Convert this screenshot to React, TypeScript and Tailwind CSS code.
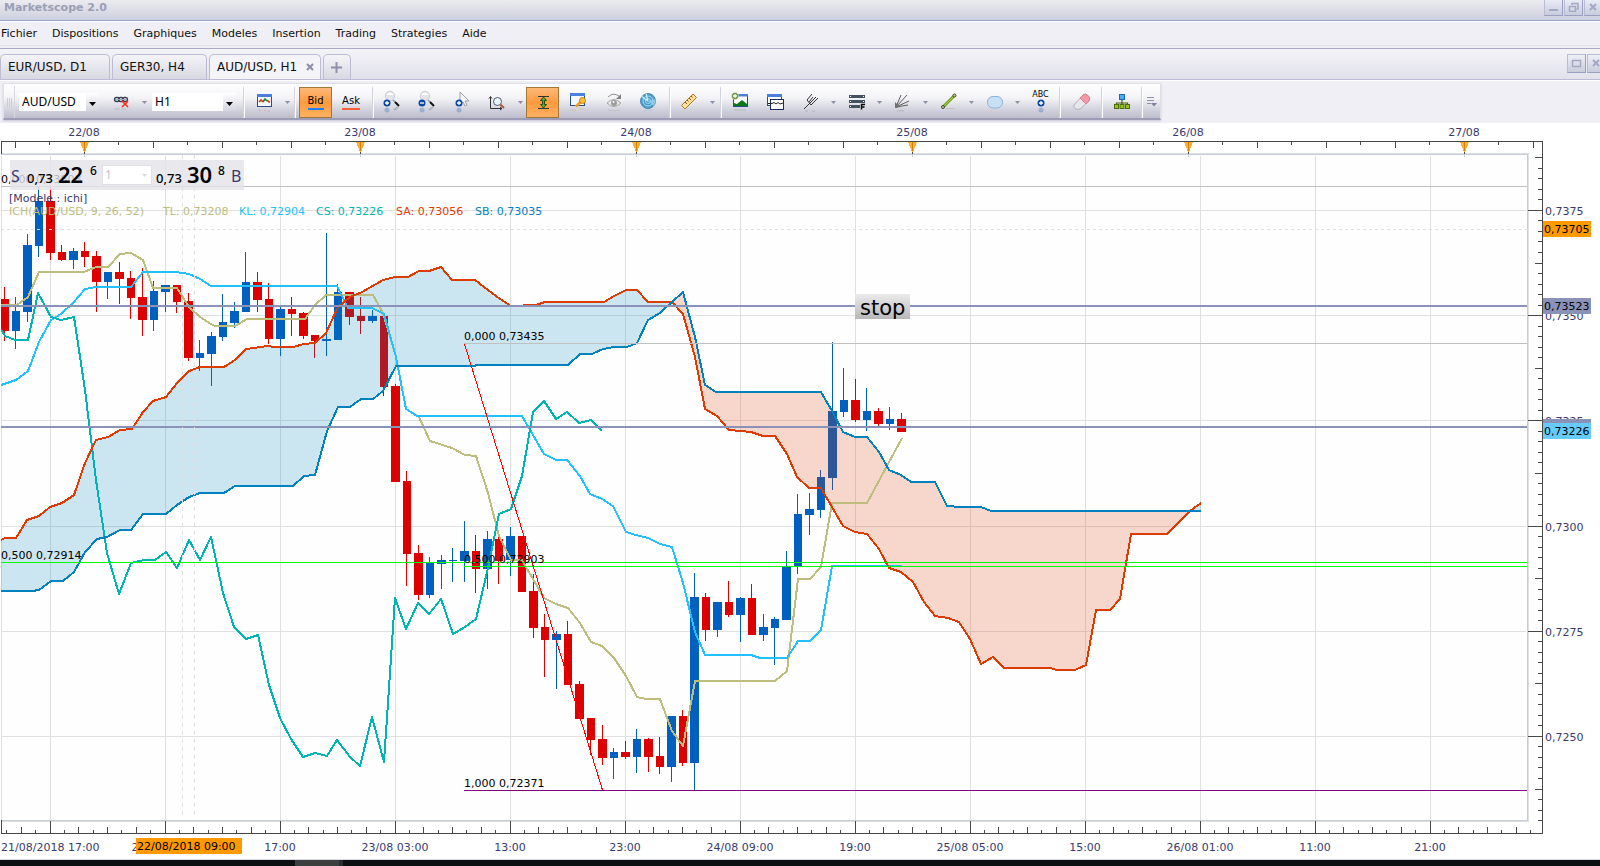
import type { ReactNode } from 'react'
import clsx from 'clsx'

// open/close coded by colour, prices kept as chart y positions:
// [up, high, low, bodyTop, bodyBottom]
type Candle = [number, number, number, number, number]

const CANDLES: Candle[] = [
  [0, 287, 341, 299, 331], [1, 297, 349, 311, 331], [1, 234, 322, 245, 312], [1, 187, 257, 201, 246],
  [0, 187, 260, 201, 253], [0, 245, 261, 252, 260], [1, 248, 269, 251, 260], [0, 242, 267, 251, 257],
  [0, 251, 312, 256, 282], [1, 272, 299, 272, 282], [0, 262, 304, 272, 279], [0, 271, 319, 278, 298],
  [0, 268, 336, 297, 320], [1, 281, 331, 291, 320], [1, 285, 312, 285, 292], [0, 285, 313, 285, 302],
  [0, 293, 361, 301, 358], [1, 340, 371, 353, 358], [1, 332, 386, 336, 354], [1, 294, 341, 322, 337],
  [1, 302, 328, 311, 323], [1, 252, 312, 282, 312], [0, 272, 312, 282, 300], [0, 283, 344, 299, 339],
  [1, 307, 356, 309, 339], [0, 297, 336, 309, 314], [0, 312, 339, 313, 336], [0, 335, 358, 335, 341],
  [1, 233, 356, 339, 341], [1, 284, 340, 292, 340], [0, 292, 325, 292, 317], [0, 297, 334, 316, 321],
  [1, 310, 323, 316, 321], [0, 312, 396, 316, 387], [0, 384, 482, 386, 482], [0, 471, 586, 481, 554],
  [0, 545, 600, 553, 595], [1, 557, 598, 562, 595], [1, 555, 589, 560, 564], [1, 548, 582, 560, 561],
  [1, 521, 582, 551, 561], [0, 535, 593, 551, 569], [1, 531, 589, 539, 569], [0, 530, 584, 539, 561],
  [1, 527, 576, 536, 560], [0, 536, 592, 536, 592], [0, 574, 638, 591, 628], [0, 614, 677, 627, 640],
  [1, 631, 689, 634, 640], [0, 621, 685, 634, 685], [0, 681, 719, 684, 719], [0, 718, 755, 718, 740],
  [0, 725, 765, 739, 758], [1, 748, 779, 752, 758], [0, 741, 759, 752, 757], [1, 729, 773, 739, 757],
  [0, 738, 772, 739, 757], [0, 737, 774, 756, 767], [1, 716, 782, 716, 767], [0, 710, 766, 716, 763],
  [1, 573, 791, 597, 763], [0, 593, 641, 597, 630], [1, 602, 637, 602, 630], [0, 581, 617, 602, 615],
  [1, 597, 642, 598, 615], [0, 584, 635, 598, 635], [1, 614, 641, 627, 635], [1, 617, 665, 619, 628],
  [1, 551, 620, 566, 620], [1, 494, 574, 514, 566], [1, 493, 535, 509, 515], [1, 470, 518, 477, 510],
  [1, 342, 490, 411, 478], [1, 368, 417, 400, 412], [0, 379, 422, 400, 420], [1, 388, 431, 411, 420],
  [0, 408, 426, 411, 424], [1, 407, 430, 419, 424], [0, 413, 432, 419, 432],
]

const TENKAN =
  '1,305 17,305 28,297 39,272 84,272 96,267 108,267 120,254 131,253 143,260 153,288 177,288 189,307 200,317 211,324 215,326 235,326 247,319 305,319 315,305 326,295 373,295 383,313 396,357 406,409 419,417 430,441 452,448 465,455 476,456 488,493 499,536 511,560 522,560 533,579 544,598 556,604 568,608 580,623 591,642 602,646 614,658 626,676 637,697 646,699 660,699 672,731 683,746 695,681 775,681 787,671 798,579 810,579 821,567 832,503 867,503 902,438'
const KIJUN =
  '1,385 16,380 28,371 39,342 51,320 61,314 73,303 85,289 96,287 131,287 143,272 176,272 189,274 200,279 211,286 337,286 348,308 372,308 384,314 396,357 406,409 417,416 522,416 533,435 544,454 556,460 567,460 580,476 590,494 602,499 613,506 626,532 636,535 648,538 660,544 672,547 683,583 695,632 705,655 751,655 760,658 787,658 798,641 810,641 821,630 832,566 902,566'
const CHIKOU =
  '1,329 5,336 15,340 28,340 38,293 51,317 61,320 74,317 85,390 96,480 107,553 119,594 131,563 144,560 155,560 166,552 177,568 189,540 200,560 211,537 223,593 234,627 246,639 258,635 269,685 280,718 291,739 303,757 315,753 327,756 337,740 350,757 360,766 372,717 384,762 395,598 406,629 418,603 429,614 441,599 453,634 465,627 476,619 488,568 499,514 511,509 522,476 533,412 544,401 556,419 567,412 579,423 591,420 602,431'

// both spans are split where they cross, so the cloud can change colour
const SPAN_A = [
  '1,540 5,538 16,538 27,520 39,516 50,507 62,503 74,495 85,463 96,440 108,437 120,430 132,429 143,412 153,401 166,397 177,383 189,371 200,367 224,367 235,360 246,349 268,346 274,347 293,347 304,344 315,343 326,333 338,307 350,297 362,292 383,280 395,277 408,277 419,271 429,271 441,267 452,280 475,280 488,290 500,299 511,306 536,305 545,302 604,302 614,296 626,290 637,290 648,302 672,302',
  '672,302 683,314 695,357 705,409 717,416 729,430 751,432 763,436 775,436 787,454 797,477 809,488 821,488 832,507 843,526 855,532 867,534 879,549 889,568 901,572 913,582 924,602 935,616 948,618 959,622 970,639 981,664 993,657 1004,668 1050,668 1057,670 1075,670 1086,665 1096,610 1110,610 1120,599 1131,534 1167,534 1190,511',
  '1190,511 1201,503',
]
const SPAN_B = [
  '1,591 32,591 39,590 51,581 63,581 74,572 85,552 97,539 107,537 120,530 131,530 143,514 166,514 177,505 189,497 200,493 224,493 235,486 293,486 304,476 315,475 327,431 338,407 350,407 361,399 373,399 383,391 396,366 475,366 476,365 568,365 580,354 592,354 603,349 614,347 627,347 637,343 648,320 660,313 672,302',
  '672,302 683,292 695,337 705,385 716,392 821,392 832,411 843,432 855,437 867,437 879,452 889,470 901,475 911,482 935,482 947,506 960,507 981,507 991,511 1190,511',
  '1190,511 1201,511',
]
const CLOUD_FILL = ['#0082be', '#dc3c00', '#0082be']

const GRID_X = Array.from({ length: 13 }, (_, i) => 50 + 115 * i)
const GRID_Y = [210, 315, 420, 526, 631, 736]
const DAYS = ['22/08', '23/08', '24/08', '25/08', '26/08', '27/08']
const HOURS = ['17:00', '23/08 03:00', '13:00', '23:00', '24/08 09:00', '19:00', '25/08 05:00', '15:00', '26/08 01:00', '11:00', '21:00']
const PRICES = ['0,7375', '0,7350', '0,7325', '0,7300', '0,7275', '0,7250']

const LEGEND = [
  { x: 9, text: 'ICH(AUD/USD, 9, 26, 52)', color: '#bdbd7d' },
  { x: 163, text: 'TL: 0,73208', color: '#bdbd7d' },
  { x: 239, text: 'KL: 0,72904', color: '#22c0ff' },
  { x: 316, text: 'CS: 0,73226', color: '#00b4b4' },
  { x: 396, text: 'SA: 0,73056', color: '#dc3c00' },
  { x: 475, text: 'SB: 0,73035', color: '#0082be' },
]

const cloudPoints = (i: number) => `${SPAN_A[i]} ${SPAN_B[i].split(' ').reverse().join(' ')}`

/* ---------- chart ---------- */

function Axes() {
  const top = Array.from({ length: 45 }, (_, i) => i - 2)
  const right = Array.from({ length: 64 }, (_, i) => i - 5)
  const bottom = Array.from({ length: 107 }, (_, i) => i - 3)
  return (
    <g>
      <g fill="#484848">
        <rect x={1} y={141} width={1542} height={1} />
        <rect x={1} y={141} width={1} height={13} />
        <rect x={1542} y={141} width={1} height={693} />
        <rect x={1} y={833} width={1542} height={1} />
        <rect x={1} y={820} width={1} height={14} />
        {top.map((k) => (
          <rect key={k} x={Math.floor(84 + 34.5 * k)} y={142} width={1} height={k % 8 === 0 ? 12 : k % 2 === 0 ? 6 : 3} />
        ))}
        {right.map((k) => {
          const len = k % 10 === 0 ? 14 : k % 5 === 0 ? 7 : 4
          return <rect key={k} x={1542 - len} y={Math.floor(210.4 + 10.52 * k)} width={len} height={1} />
        })}
        {bottom.map((k) => {
          const len = k % 8 === 0 ? 12 : k % 2 === 0 ? 6 : 3
          return <rect key={k} x={Math.floor(50 + 14.375 * k)} y={833 - len} width={1} height={len} />
        })}
      </g>
      {DAYS.map((day, i) => {
        const x = 84 + 276 * i
        return (
          <g key={day}>
            <path d={`M${x - 4} 142h9l-4 10h-1z`} fill="#ffae33" />
            <rect x={x} y={142} width={1} height={9} fill="#d98200" />
            <rect x={x} y={154} width={1} height={3} fill="#c3cdd9" />
            <text x={x} y={136} textAnchor="middle" fill="#3a3a6e">{day}</text>
          </g>
        )
      })}
      <g fill="#3a3a6e">
        <text x={1} y={851}>21/08/2018 17:00</text>
        <text x={165} y={851} textAnchor="middle">22/08 07:00</text>
        {HOURS.map((hour, i) => (
          <text key={i} x={280 + 115 * i} y={851} textAnchor="middle">{hour}</text>
        ))}
        {PRICES.map((price, i) => (
          <text key={price} x={1545} y={GRID_Y[i] + 5}>{price}</text>
        ))}
      </g>
      <rect x={136} y={838} width={106} height={16} fill="#ff9900" />
      <text x={137} y={850}>22/08/2018 09:00</text>
      <PriceTag y={221} fill="#ff9900" text="0,73705" />
      <PriceTag y={298} fill="#8a92b8" text="0,73523" />
      <PriceTag y={419} fill="#8a92b8" />
      <PriceTag y={423} fill="#66ccff" text="0,73226" />
    </g>
  )
}

function PriceTag({ y, fill, text }: { y: number; fill: string; text?: string }) {
  return (
    <g>
      <rect x={1543} y={y} width={48} height={16} fill={fill} />
      {text && <text x={1544} y={y + 12}>{text}</text>}
    </g>
  )
}

function Chart() {
  return (
    <svg
      viewBox="0 123 1600 736"
      className="block h-auto w-full bg-white font-['DejaVu_Sans',Verdana,sans-serif] text-[11px]"
      shapeRendering="crispEdges"
      role="img"
      aria-label="AUD/USD H1"
    >
      {/* grid and frame */}
      <rect x={1} y={155} width={1526} height={665} fill="#fefefe" />
      <g fill="#e0e0e0">
        <rect x={1} y={156} width={1} height={664} />
        {GRID_X.map((x) => <rect key={x} x={x} y={156} width={1} height={664} />)}
        {GRID_Y.map((y) => <rect key={y} x={1} y={y} width={1525} height={1} />)}
        <rect x={1} y={153} width={1528} height={1} />
        <rect x={1528} y={153} width={1} height={669} />
        <rect x={1} y={821} width={1528} height={1} />
      </g>
      <path d="M1 154.500H1527.500V820.500H1" fill="none" stroke="#c3cdd9" />

      <Axes />

      <clipPath id="plot">
        <rect x={1} y={155} width={1526} height={665} />
      </clipPath>
      <g clipPath="url(#plot)">
        {CANDLES.map(([up, high, low, open, close], i) => {
          const x = 4.5 + 11.5 * i
          return (
            <g key={i} fill={up ? '#0060c0' : '#dc0000'}>
              <rect x={Math.floor(x - 0.5)} y={high} width={1} height={low - high} />
              <rect x={Math.ceil(x - 4.5)} y={open} width={i % 2 ? 8 : 9} height={close - open} />
            </g>
          )
        })}
        {CLOUD_FILL.map((fill, i) => (
          <polygon key={i} points={cloudPoints(i)} fill={fill} fillOpacity={0.2} />
        ))}
        <g fill="none" strokeWidth={2} strokeLinejoin="round">
          <polyline points={TENKAN} stroke="#bdbd7d" />
          <polyline points={KIJUN} stroke="#22c0ff" />
          <polyline points={CHIKOU} stroke="#00b4b4" />
          <polyline points={SPAN_A.join(' ')} stroke="#dc3c00" />
          <polyline points={SPAN_B.join(' ')} stroke="#0082be" />
        </g>
      </g>

      {/* fibonacci levels */}
      <text x={1} y={183}>0,000 0,73808</text>
      <rect x={1} y={186} width={1526} height={1} fill="#c0c0c0" />
      <rect x={464} y={343} width={1063} height={1} fill="#c0c0c0" />
      <rect x={1} y={562} width={1526} height={1} fill="#00ff00" />
      <rect x={464} y={566} width={1063} height={1} fill="#00ff00" />
      <rect x={464} y={790} width={1063} height={1} fill="#800080" />
      <path d="M464.500 344L602.500 790" stroke="#ff0000" />
      <text x={1} y={559}>0,500 0,72914</text>
      <text x={464} y={340}>0,000 0,73435</text>
      <text x={464} y={563}>0,500 0,72903</text>
      <text x={464} y={787}>1,000 0,72371</text>

      {/* support / resistance */}
      <rect x={1} y={305} width={1526} height={2} fill="#8a92b8" />
      <rect x={1} y={426} width={1526} height={2} fill="#8a92b8" />

      {/* cursor */}
      <g stroke="#e0e0e0" strokeDasharray="3 3">
        <path d="M1 229.500H1528" />
        <path d="M182.500 155V818" strokeDasharray="4 4" />
        <path d="M194.500 155V818" strokeDasharray="4 4" />
      </g>

      <text x={9} y={202} fill="#3a3a6e">[Modele : ichi]</text>
      {LEGEND.map(({ x, text, color }) => (
        <text key={x} x={x} y={215} fill={color}>{text}</text>
      ))}

      <defs>
        <linearGradient id="note" x2="0" y2="1">
          <stop stopColor="#ebebeb" />
          <stop offset="1" stopColor="#b8b8b8" />
        </linearGradient>
      </defs>
      <rect x={855} y={294} width={55} height={25} fill="url(#note)" />
      <text x={860} y={315} className="text-[21px]">stop</text>
    </svg>
  )
}

function QuotePanel() {
  return (
    <div className="absolute left-[10px] top-[37px] flex h-[30px] w-[234px] items-end bg-[#e4e4e8]/80 font-['Noto_Sans',sans-serif] leading-none text-black">
      <span className="w-[17px] pb-[6px] pl-[1px] text-[16px] text-[#3a3a6e]">S</span>
      <span className="w-[31px] pb-[5px] text-[13px] font-medium">0,73</span>
      <span className="w-[32px] pb-[5px] text-[22px] font-semibold">22</span>
      <span className="w-[12px] self-start pt-[5px] text-[12px] font-medium">6</span>
      <span className="relative mb-[5px] h-[20px] w-[50px] border border-[#e0e0e4] bg-white">
        <select aria-label="Lots" className="block h-full w-full appearance-none bg-transparent pl-[2px] text-[12px] leading-none text-[#c4c4cc]">
          <option>1</option>
        </select>
        <svg viewBox="0 0 5 3" className="pointer-events-none absolute right-1 top-2 h-[3px] w-[5px]"><path d="M0 0h5L2.500 3z" fill="#d8d8de" /></svg>
      </span>
      <span className="w-[35px] pb-[5px] pl-[4px] text-[13px] font-medium">0,73</span>
      <span className="w-[31px] pb-[5px] text-[22px] font-semibold">30</span>
      <span className="w-[13px] self-start pt-[5px] text-[12px] font-medium">8</span>
      <span className="pb-[6px] text-[16px] text-[#3a3a6e]">B</span>
    </div>
  )
}

/* ---------- toolbar ---------- */

function Tool({ label, width, children, active }: { label: string; width: string; children: ReactNode; active?: boolean }) {
  return (
    <button
      type="button"
      aria-label={label}
      className={clsx(
        'flex h-[31px] shrink-0 items-center justify-center',
        width,
        active && 'border border-[#a07838] bg-linear-to-b from-[#fdb878] via-[#ff9a3c] to-[#ffb060]',
      )}
    >
      {children}
    </button>
  )
}

function More({ width }: { width: string }) {
  return (
    <Tool label="Plus" width={width}>
      <svg viewBox="0 0 5 3" className="h-[3px] w-[5px]"><path d="M0 0h5L2.500 3z" fill="#8e8ea6" /></svg>
    </Tool>
  )
}

function Sep({ className }: { className?: string }) {
  return <div className={clsx('h-[31px] w-[2px] shrink-0 border-l border-r border-l-[#d2d2de] border-r-white', className)} />
}

function Icon({ children }: { children: ReactNode }) {
  return <svg viewBox="0 0 20 24" className="h-[24px] w-[20px]" fill="none">{children}</svg>
}

function Combo({ label, value, width }: { label: string; value: string; width: string }) {
  return (
    <span className={clsx('relative h-[18px] shrink-0 bg-white', width)}>
      <select aria-label={label} className="block h-full w-full appearance-none bg-transparent pl-[3px] font-['Noto_Sans',sans-serif] text-[12px] leading-[16px] text-black">
        <option>{value}</option>
      </select>
      <span className="pointer-events-none absolute inset-y-0 right-0 flex w-[13px] items-center justify-center bg-linear-to-b from-white to-[#d4d4de]">
        <svg viewBox="0 0 7 4" className="mt-1 h-[4px] w-[7px]"><path d="M0 0h7L3.500 4z" fill="#000" /></svg>
      </span>
    </span>
  )
}

function BluePlus({ x, y, minus }: { x: number; y: number; minus?: boolean }) {
  return (
    <g>
      <circle cx={x} cy={y} r={3.5} fill="#0848a8" />
      <path d={minus ? `M${x - 2} ${y}h4` : `M${x - 2} ${y}h4M${x} ${y - 2}v4`} stroke="#fff" strokeWidth={1.3} />
      <circle cx={x} cy={y + 7} r={2.5} fill="#0848a8" opacity={0.25} />
    </g>
  )
}

function Lens({ minus }: { minus?: boolean }) {
  return (
    <Icon>
      <circle cx={8} cy={6} r={4.7} fill="#e4e4e8" stroke="#ccccd0" />
      <path d="M4 5q4-5 8 0z" fill="#fff" />
      <path d="M11 10l2 2" stroke="#999" strokeWidth={1.6} />
      <path d="M13 12l4 4" stroke="#111" strokeWidth={2} />
      <path d="M12 20l4-3" stroke="#777" strokeWidth={2} opacity={0.4} />
      <BluePlus x={5} y={13} minus={minus} />
    </Icon>
  )
}

function Toolbar() {
  return (
    <div className="ml-[3px] mt-[2px] flex h-[37px] w-[1158px] items-center border border-b-[2px] border-[#e0e0e6] border-b-[#9c9cb6] bg-linear-to-b from-white via-[#f4f4f8] via-40% to-[#bcbccc] pt-[2px] shadow-[0_1px_2px_#c8c8d4]">
      <div className="flex h-full w-[11px] shrink-0 items-center justify-center gap-px border-r border-[#d8d8e0]">
        <i className="h-[9px] w-px bg-[#ccccd8]" /><i className="h-[9px] w-px bg-[#ccccd8]" /><i className="h-[9px] w-px bg-[#ccccd8]" />
      </div>
      <div className="w-[4px] shrink-0" />
      <Combo label="Instrument" value="AUD/USD" width="w-[80px]" />
      <Tool label="Lien" width="ml-[3px] w-[38px]">
        <Icon>
          <g stroke="#3c4450" strokeWidth={1.3}>
            <rect x={3.500} y={7.500} width={5} height={4} rx={2} />
            <rect x={7.500} y={7.500} width={5} height={4} rx={2} />
            <rect x={11.500} y={7.500} width={5} height={4} rx={2} />
          </g>
          <path d="M4 9.500h12" stroke="#9aa8c8" />
          <path d="M11 11l6 6m0-6l-6 6" stroke="#ff2a10" strokeWidth={1.600} />
          <path d="M3 19h6M10 19h5" stroke="#aaa" opacity={0.6} />
        </Icon>
      </Tool>
      <More width="w-[9px]" />
      <div className="w-[3px] shrink-0" />
      <Combo label="Période" value="H1" width="w-[84px]" />
      <Sep className="ml-[7px]" />
      <Tool label="Type de graphique" width="w-[37px]">
        <Icon>
          <rect x={3.500} y={4.500} width={14} height={12} fill="#f4f8ff" stroke="#2a4c88" />
          <rect x={3} y={4} width={15} height={3} fill="#4a80dc" />
          <path d="M5 12l2-2 2 2" stroke="#e03010" strokeWidth={1.6} />
          <path d="M9 12l2-3 2 2" stroke="#208030" strokeWidth={1.6} />
          <path d="M13 10l2 2h1" stroke="#e03010" strokeWidth={1.6} />
          <path d="M5 20l2 1m3 0l2-1m2 1h2" stroke="#c88" opacity={0.5} />
        </Icon>
      </Tool>
      <More width="w-[10px]" />
      <Sep className="ml-[2px]" />
      <Tool label="Bid" width="ml-[3px] w-[33px]" active>
        <span className="border-b-2 border-[#1e80ff] text-[10px] leading-[14px] text-black">Bid</span>
      </Tool>
      <Tool label="Ask" width="w-[38px]">
        <span className="border-b-2 border-[#ff6035] text-[10px] leading-[14px] text-black">Ask</span>
      </Tool>
      <Sep className="ml-[2px]" />
      <Tool label="Zoom avant" width="w-[36px]"><Lens /></Tool>
      <Tool label="Zoom arrière" width="w-[34px]"><Lens minus /></Tool>
      <Tool label="Curseur" width="w-[35px]">
        <Icon>
          <path d="M8 2v13l3-3 2 4 2-1-2-4h4z" fill="#f6f6f8" stroke="#a0a0a8" />
          <BluePlus x={7} y={13} />
        </Icon>
      </Tool>
      <Tool label="Echelle" width="w-[35px]">
        <Icon>
          <path d="M3.500 7v11.500H15" stroke="#333" />
          <path d="M2 8.500L3.500 6.500 5 8.500M13 17l2 1.500-2 1.500" stroke="#333" />
          <circle cx={10.500} cy={11.500} r={4} fill="#e8f6fc" stroke="#557" />
          <path d="M13.500 14.500l3.500 3.500" stroke="#b05828" strokeWidth={1.800} />
        </Icon>
      </Tool>
      <More width="w-[12px]" />
      <Tool label="Echelle auto" width="w-[33px]" active>
        <Icon>
          <path d="M5 6.500h11M5 18.500h11" stroke="#333" />
          <path d="M10.500 7l3 3.500h-2v4h2l-3 3.500-3-3.500h2v-4h-2z" fill="#4cb030" stroke="#205010" />
        </Icon>
      </Tool>
      <Tool label="Propriétés" width="w-[37px]">
        <Icon>
          <rect x={2.500} y={3.500} width={14} height={12} fill="#f4f8ff" stroke="#2a4c88" />
          <rect x={2} y={3} width={15} height={3} fill="#4a80dc" />
          <path d="M8 16.500l5-5" stroke="#f0a018" strokeWidth={2.600} />
          <circle cx={14.500} cy={10.500} r={3} fill="#ffc038" stroke="#c88010" />
          <path d="M3 20h5m4-1h4" stroke="#e0b060" opacity={0.5} />
        </Icon>
      </Tool>
      <Tool label="Afficher" width="w-[36px]">
        <Icon>
          <path d="M3 13q7-7 14 0q-7 7-14 0z" fill="#e8e8e8" stroke="#a4a4a4" />
          <circle cx={10} cy={13} r={3} fill="#9c9c9c" />
          <circle cx={9.500} cy={12} r={1} fill="#fff" />
          <path d="M4 7q5-5 11-1" stroke="#909090" />
          <path d="M17 4v5h-5z" fill="#808080" />
          <path d="M4 20q6 2 12 0" stroke="#aaa" opacity={0.4} />
        </Icon>
      </Tool>
      <Tool label="Radar" width="w-[32px]">
        <Icon>
          <circle cx={10} cy={11} r={7.500} fill="#4a9ecc" stroke="#4a88b0" />
          <circle cx={10} cy={11} r={5} stroke="#a4d8f0" />
          <circle cx={10} cy={11} r={2.500} stroke="#a4d8f0" />
          <path d="M10 11L3 6M10 11L8 3.500" stroke="#cdeefa" strokeWidth={1.2} />
          <path d="M10 11l7.500-2a7.500 7.500 0 0 1-2 7z" fill="#9cd4ee" opacity={0.7} />
          <path d="M6 21q4-2 8 0" stroke="#8cc4e4" opacity={0.5} />
        </Icon>
      </Tool>
      <Sep className="ml-[5px]" />
      <Tool label="Règle" width="w-[36px]">
        <Icon>
          <path d="M2.500 15.500L14 4l3.500 3.500L6 19z" fill="#ffe098" stroke="#b07828" />
          <path d="M6 12l2 2m0-4l1.500 1.500M10 8l2 2m0-4l1.500 1.500" stroke="#805018" />
        </Icon>
      </Tool>
      <More width="w-[11px]" />
      <Sep className="ml-[2px]" />
      <Tool label="Image" width="w-[36px]">
        <Icon>
          <rect x={3.500} y={4.500} width={14} height={12} fill="#fff" stroke="#2a4c88" />
          <rect x={4} y={4} width={14} height={2.500} fill="#4a80dc" />
          <path d="M4 16v-3l3 1 5-4 5 4v2z" fill="#087818" />
          <circle cx={5} cy={6} r={3.500} fill="#5c9428" stroke="#fff" strokeWidth={0.500} />
          <path d="M3 6h4M5 4v4" stroke="#fff" strokeWidth={1.300} />
          <path d="M4 20h12" stroke="#70a878" opacity={0.400} />
        </Icon>
      </Tool>
      <Tool label="Indicateur" width="w-[35px]">
        <Icon>
          <rect x={1.500} y={4.500} width={14} height={11} fill="#fff" stroke="#2a4c88" />
          <rect x={1} y={4} width={15} height={3} fill="#4a80dc" />
          <rect x={4.500} y={9.500} width={13} height={10} fill="#fff" stroke="#1c2c60" />
          <path d="M2 13.500h4l2-1 2 1.500 2-1.500 2 1.500 3-1" stroke="#222" />
        </Icon>
      </Tool>
      <Tool label="Fourchette" width="w-[36px]">
        <Icon>
          <path d="M3 19L14 8M6 10l4 5M6 10l5-6M10 12l5-5M8 12l4-5M10 15l7-7" stroke="#333" />
          <path d="M4 21h3m4 0h3" stroke="#999" opacity={0.5} />
        </Icon>
      </Tool>
      <More width="w-[9px]" />
      <Tool label="Fibonacci" width="w-[37px]">
        <Icon>
          <path d="M2 6.500h16M2 11.500h16M2 16.500h11" stroke="#44525f" strokeWidth={3} />
          <path d="M3 6.500h1M16 6.500h1M3 11.500h1M16 11.500h1M3 16.500h1" stroke="#fff" />
          <path d="M14.500 19.500v-5h3.500M15 17h2.500" stroke="#000" strokeWidth={1.400} />
        </Icon>
      </Tool>
      <More width="w-[9px]" />
      <Tool label="Eventail" width="w-[37px]">
        <Icon>
          <path d="M3 17L8 5M3 17L14 5M3 17l13-6M3 17l12-2" stroke="#606060" />
          <path d="M2 18v-6l5 5z" fill="#707070" />
          <path d="M4 21q4-1 7 0" stroke="#999" opacity={0.500} />
        </Icon>
      </Tool>
      <More width="w-[9px]" />
      <Tool label="Ligne" width="w-[37px]">
        <Icon>
          <path d="M4 17L15 6" stroke="#4c8008" strokeWidth={2.600} />
          <path d="M4 17L15 6" stroke="#a4d428" strokeWidth={1.300} />
          <circle cx={4} cy={17} r={1.500} fill="#c8c8a0" stroke="#404820" />
          <circle cx={15.500} cy={5.500} r={1.500} fill="#c8c8a0" stroke="#404820" />
          <path d="M7 18.500h9" stroke="#aaa" opacity={0.500} />
        </Icon>
      </Tool>
      <More width="w-[9px]" />
      <Tool label="Ellipse" width="w-[37px]">
        <Icon>
          <rect x={2.500} y={6.500} width={15} height={11.500} rx={5.500} fill="#c8e0f4" stroke="#8cb0dc" />
        </Icon>
      </Tool>
      <More width="w-[9px]" />
      <Tool label="Texte" width="w-[37px]">
        <span className="flex flex-col items-center">
          <span className="text-[8px] leading-[8px] text-black">ABC</span>
          <svg viewBox="0 0 8 14" className="h-[14px] w-[8px]"><BluePlus x={4} y={4} /></svg>
        </span>
      </Tool>
      <Sep />
      <Tool label="Effacer" width="w-[40px]">
        <Icon>
          <path d="M3 15l9-10q2-2 5 0.500t1 5.500L9 19q-3 1-5-0.500t-1-3.500z" fill="#e8e8ec" stroke="#b0b0b8" />
          <path d="M9 8l3-3q2-2 5 0.500t1 5.500l-3 3z" fill="#f09ca6" stroke="#d88090" />
        </Icon>
      </Tool>
      <Sep />
      <Tool label="Hiérarchie" width="w-[38px]">
        <Icon>
          <path d="M10 9v4M4.500 16v-3h11v3M10 13v3" stroke="#486010" strokeWidth={1.200} />
          <rect x={7.500} y={4.500} width={5} height={5} fill="#50a8f8" stroke="#1868c0" />
          <g fill="#98c020" stroke="#4c7008">
            <rect x={2.500} y={14.500} width={4} height={4} />
            <rect x={8} y={14.500} width={4} height={4} />
            <rect x={13.500} y={14.500} width={4} height={4} />
          </g>
        </Icon>
      </Tool>
      <Sep />
      <Tool label="Options" width="w-[18px]">
        <svg viewBox="0 0 10 10" className="h-[10px] w-[10px]"><path d="M0 .5h7M0 3.500h7M0 6.500h4" stroke="#9090a4" /><path d="M4 6h6L7 9.500z" fill="#8080a0" /></svg>
      </Tool>
    </div>
  )
}

/* ---------- window chrome ---------- */

function WinButton({ label, children }: { label: string; children: ReactNode }) {
  return (
    <button type="button" aria-label={label} className="flex h-[19px] w-[19px] shrink-0 items-center justify-center border border-[#b8bcd4] border-b-[#9ca0c0] border-r-[#9ca0c0] bg-linear-to-b from-[#eef0f8] to-[#c8ccdc]">
      <svg viewBox="0 0 11 11" className="h-[11px] w-[11px]" fill="none" stroke="#a4a8c4" strokeWidth={2}>{children}</svg>
    </button>
  )
}

function Tab({ children, width, active }: { children: ReactNode; width: string; active?: boolean }) {
  return (
    <button
      type="button"
      className={clsx(
        'flex h-[25px] items-center rounded-t-[5px] border border-b-0 border-[#bcbcd4] pl-[7px] text-[12px] leading-[16px]',
        width,
        active ? 'bg-[#f3f3f8]' : 'bg-linear-to-b from-[#f4f4f8] to-[#d8d8e2]',
      )}
    >
      {children}
    </button>
  )
}

const MENU = ['Fichier', 'Dispositions', 'Graphiques', 'Modeles', 'Insertion', 'Trading', 'Strategies', 'Aide']

export default function App() {
  return (
    <div className="w-full overflow-hidden bg-[#f0eff5] font-['DejaVu_Sans',Verdana,sans-serif] text-[11px] text-[#111]">
      <header className="flex h-[21px] items-start justify-between overflow-hidden border-b border-[#a0a4c4] bg-linear-to-b from-[#ebebf0] to-[#cdd0de]">
        <h1 className="pl-[4px] text-[11px] font-bold leading-[16px] text-[#9a9eb6]">Marketscope 2.0</h1>
        <div className="-mr-[3px] -mt-[3px] flex gap-px">
          <WinButton label="Réduire"><path d="M1 9h9" /></WinButton>
          <WinButton label="Restaurer"><path d="M4 4V2.500h6V8H8.500" strokeWidth={1.500} /><path d="M1.500 5.500h6v5h-6z" strokeWidth={1.500} /></WinButton>
          <WinButton label="Fermer"><path d="M2 3l6 6m0-6L2 9" /></WinButton>
        </div>
      </header>

      <nav className="flex h-[25px] items-center gap-[15px] border-b border-t border-b-[#e2e2e8] border-t-white pl-[1px]">
        {MENU.map((item) => (
          <button key={item} type="button" className="leading-[14px]">{item}</button>
        ))}
      </nav>

      <div className="mt-[2px] flex h-[32px] items-end justify-between border-b border-t border-b-[#bcbcd6] border-t-[#a9a9c6] bg-linear-to-b from-[#f4f4f7] to-[#e1e1ec]">
        <div className="flex gap-[2px]">
          <Tab width="w-[110px]">EUR/USD, D1</Tab>
          <Tab width="w-[95px]">GER30, H4</Tab>
          <Tab width="w-[112px]" active>
            AUD/USD, H1
            <svg viewBox="0 0 8 8" className="ml-[9px] h-[8px] w-[8px]"><path d="M1 1l6 6m0-6L1 7" stroke="#8c8ca8" strokeWidth={2} /></svg>
          </Tab>
          <Tab width="w-[28px]">
            <svg viewBox="0 0 11 11" role="img" aria-label="Nouvel onglet" className="h-[11px] w-[11px]"><path d="M0 5.500h11M5.500 0v11" stroke="#9090ac" strokeWidth={2} /></svg>
          </Tab>
        </div>
        <div className="-mr-[6px] mb-[6px] flex gap-px">
          <WinButton label="Agrandir"><path d="M1.500 2.500h8v6h-8z" strokeWidth={1.500} /></WinButton>
          <WinButton label="Fermer le graphique"><path d="M2 2l6 6m0-6L2 8" /></WinButton>
        </div>
      </div>

      <div className="h-[43px] border-t border-white">
        <Toolbar />
      </div>

      <main className="relative">
        <Chart />
        <QuotePanel />
      </main>

      <footer className="flex h-[7px] border-t border-[#d8d8e0] bg-[#0d1012]">
        <div className="ml-[295px] h-full w-[44px] bg-[#3c3e40]" />
        <div className="h-full w-[4px] bg-[#2c2e30]" />
      </footer>
    </div>
  )
}
